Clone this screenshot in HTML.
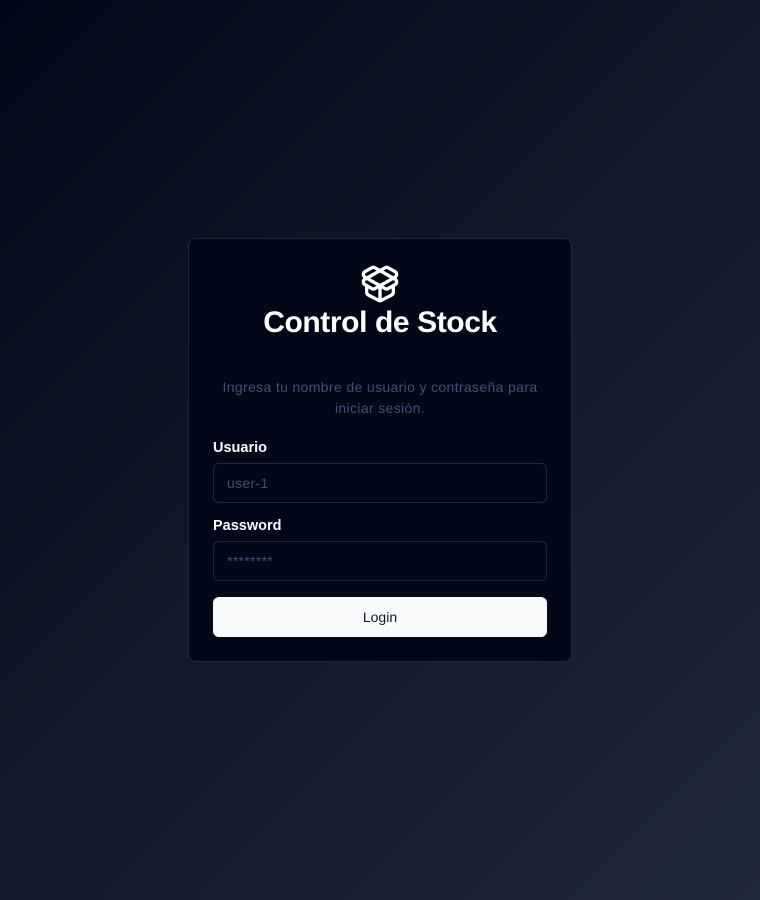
<!DOCTYPE html>
<html><head><meta charset="utf-8"><style>
*{box-sizing:border-box;margin:0;padding:0}
body{width:760px;height:900px;background:linear-gradient(135deg,#020817 0%,#111827 45%,#1e293b 100%);font-family:"Liberation Sans",sans-serif;position:relative;overflow:hidden}
.card{position:absolute;left:188px;top:238px;width:384px;height:424px;background:#020817;border:1px solid #1e293b;border-radius:8px}
.icon{position:absolute;left:171px;top:25px}
h1{position:absolute;top:67px;left:0;right:0;text-align:center;color:#fff;font-size:30px;font-weight:bold;letter-spacing:-0.4px}
.desc{position:absolute;top:138px;left:20px;right:20px;text-align:center;color:#3f5070;font-size:14px;line-height:21px;letter-spacing:0.35px}
label{position:absolute;left:24px;color:#f8fafc;font-size:14.5px;font-weight:bold}
.in{position:absolute;left:24px;width:334px;height:40px;border:1px solid #1e293b;border-radius:6px;color:#3f5070;font-size:14px;padding:11px 13px;letter-spacing:0.3px}
.btn{position:absolute;left:24px;top:358px;width:334px;height:40px;background:#f8fafc;border-radius:6px;color:#0f172a;font-size:14px;text-align:center;line-height:40px}
</style></head><body>
<div class="card">
<svg class="icon" width="40" height="40" viewBox="0 0 24 24" fill="none" stroke="#fff" stroke-width="2" stroke-linecap="round" stroke-linejoin="round"><path d="M12 22v-9"/><path d="M15.17 2.21a1.67 1.67 0 0 1 1.63 0L21 4.57a1.93 1.93 0 0 1 0 3.36L8.82 14.79a1.655 1.655 0 0 1-1.64 0L3 12.43a1.930 1.93 0 0 1 0-3.36z"/><path d="M20 13v3.87a2.06 2.06 0 0 1-1.11 1.830l-6 3.08a1.93 1.93 0 0 1-1.78 0l-6-3.08A2.06 2.06 0 0 1 4 16.87V13"/><path d="M21 12.43a1.93 1.93 0 0 0 0-3.36L8.83 2.2a1.64 1.64 0 0 0-1.63 0L3 4.57a1.93 1.93 0 0 0 0 3.36l12.18 6.86a1.636 1.636 0 0 0 1.63 0z"/></svg>
<h1>Control de Stock</h1>
<div class="desc">Ingresa tu nombre de usuario y contraseña para iniciar sesión.</div>
<label style="top:201px">Usuario</label>
<div class="in" style="top:224px">user-1</div>
<label style="top:279px">Password</label>
<div class="in" style="top:302px">********</div>
<div class="btn">Login</div>
</div>
</body></html>
